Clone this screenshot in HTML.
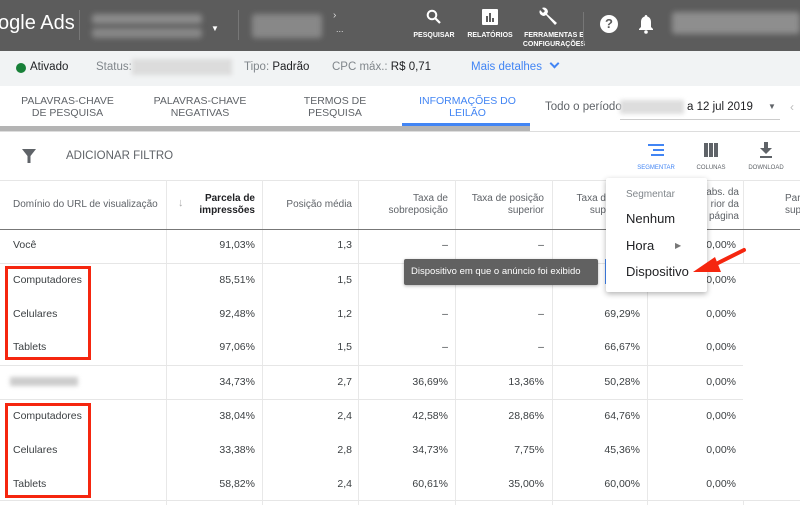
<!DOCTYPE html>
<html><head><meta charset="utf-8"><style>
*{margin:0;padding:0;box-sizing:border-box}
body{width:800px;height:505px;overflow:hidden;background:#fff;font-family:"Liberation Sans",Arial,sans-serif;color:#3c4043;position:relative}
.a{position:absolute;white-space:nowrap}
.blur{position:absolute;background:#8a8a8a;filter:blur(3px);border-radius:3px}
.hd{position:absolute;left:0;top:0;width:800px;height:51px;background:#5c5c5c}
.ic{color:#fff;font-size:7px;font-weight:bold;text-align:center;line-height:9px}
.tab{font-size:10.5px;color:#5f6368;text-align:center;line-height:12px;font-weight:500}
.th{font-size:10px;color:#5f6368;line-height:12px;text-align:right}
.c{font-size:10.5px;color:#3c4043}
.r{text-align:right}
.vl{position:absolute;top:180px;width:1px;height:325px;background:#e8e8e8}
.hl{position:absolute;left:0;width:800px;height:1px;background:#e6e6e6}
</style></head><body>
<div class="hd"></div>
<div class="a" style="left:-2px;top:12px;font-size:20px;color:#fff">ogle Ads</div>
<div class="a" style="left:79px;top:10px;width:1px;height:30px;background:#777"></div>
<div class="blur" style="left:92px;top:14px;width:110px;height:10px;background:#8c8c8c"></div>
<div class="blur" style="left:92px;top:28px;width:110px;height:10px;background:#888"></div>
<div class="a" style="left:211px;top:24px;color:#fff;font-size:8px">▼</div>
<div class="a" style="left:238px;top:10px;width:1px;height:30px;background:#777"></div>
<div class="blur" style="left:252px;top:14px;width:70px;height:24px;background:#888"></div>
<div class="a" style="left:333px;top:10px;color:#ddd;font-size:10px">›</div>
<div class="a" style="left:336px;top:24px;color:#ddd;font-size:9px">...</div>
<svg class="a" style="left:426px;top:9px" width="16" height="16" viewBox="0 0 16 16"><circle cx="6" cy="6" r="4.3" fill="none" stroke="#fff" stroke-width="2"/><path d="M9 9l5 5" stroke="#fff" stroke-width="2.2"/></svg>
<div class="a ic" style="left:409px;top:31px;width:50px">PESQUISAR</div>
<svg class="a" style="left:482px;top:9px" width="16" height="16"><rect x="0" y="0" width="16" height="16" rx="1" fill="#fff"/><rect x="4" y="7" width="2" height="6" fill="#5c5c5c"/><rect x="7" y="4" width="2" height="9" fill="#5c5c5c"/><rect x="10" y="9" width="2" height="4" fill="#5c5c5c"/></svg>
<div class="a ic" style="left:465px;top:31px;width:50px">RELATÓRIOS</div>
<svg class="a" style="left:537px;top:6px" width="22" height="22" viewBox="0 0 22 22"><path d="M3 4a4 4 0 0 0 6 5l9 10 2-2-10-9a4 4 0 0 0-5-6l3 3-2 2z" fill="#fff"/></svg>
<div class="a ic" style="left:522px;top:31px;width:64px">FERRAMENTAS E<br>CONFIGURAÇÕES</div>
<div class="a" style="left:583px;top:12px;width:1px;height:34px;background:#777"></div>
<div class="a" style="left:600px;top:15px;width:18px;height:18px;border-radius:50%;background:#fff;color:#5c5c5c;font-size:13px;font-weight:bold;text-align:center;line-height:18px">?</div>
<svg class="a" style="left:638px;top:14px" width="16" height="20" viewBox="0 0 16 20"><path d="M8 1c-1 0-1.3.8-1.3 1.5C4 3.3 3 5.5 3 8v5l-2 2v1h14v-1l-2-2V8c0-2.5-1-4.7-3.7-5.5C9.3 1.8 9 1 8 1z" fill="#fff"/><circle cx="8" cy="18" r="1.8" fill="#fff"/></svg>
<div class="blur" style="left:672px;top:12px;width:128px;height:22px;background:#8e8e8e"></div>

<div class="a" style="left:0;top:51px;width:800px;height:35px;background:#f1f3f4"></div>
<div class="a" style="left:16px;top:63px;width:10px;height:10px;border-radius:50%;background:#188038"></div>
<div class="a" style="left:30px;top:61px;font-size:11.5px;color:#202124">Ativado</div>
<div class="a" style="left:96px;top:61px;font-size:11.5px;color:#80868b">Status:</div>
<div class="a" style="left:132px;top:59px;width:100px;height:16px;background:#dcdcdc;filter:blur(2px)"></div>
<div class="a" style="left:244px;top:61px;font-size:11.5px;color:#80868b">Tipo: <span style="color:#202124">Padrão</span></div>
<div class="a" style="left:332px;top:61px;font-size:11.5px;color:#80868b">CPC máx.: <span style="color:#202124">R$ 0,71</span></div>
<div class="a" style="left:471px;top:61px;font-size:11.5px;color:#4285f4">Mais detalhes <span style="display:inline-block;width:7px;height:7px;border-right:2px solid #4285f4;border-bottom:2px solid #4285f4;transform:rotate(45deg);margin-left:6px;position:relative;top:-3px"></span></div>

<div class="a tab" style="left:10px;top:95px;width:115px">PALAVRAS-CHAVE<br>DE PESQUISA</div>
<div class="a tab" style="left:140px;top:95px;width:120px">PALAVRAS-CHAVE<br>NEGATIVAS</div>
<div class="a tab" style="left:285px;top:95px;width:100px">TERMOS DE<br>PESQUISA</div>
<div class="a tab" style="left:405px;top:95px;width:125px;color:#4285f4">INFORMAÇÕES DO<br>LEILÃO</div>
<div class="a" style="left:402px;top:123px;width:128px;height:3px;background:#4285f4"></div>
<div class="a" style="left:0;top:126px;width:530px;height:5px;background:#b4b4b4"></div>
<div class="a" style="left:0;top:131px;width:800px;height:1px;background:#ddd"></div>
<div class="a" style="left:545px;top:101px;font-size:11.5px;color:#5f6368">Todo o período</div>
<div class="a" style="left:620px;top:100px;width:64px;height:14px;background:#ddd;filter:blur(2px)"></div>
<div class="a" style="left:687px;top:101px;font-size:11.5px;color:#202124">a 12 jul 2019</div>
<div class="a" style="left:768px;top:102px;font-size:8px;color:#5f6368">▼</div>
<div class="a" style="left:620px;top:119px;width:160px;height:1px;background:#ccc"></div>
<div class="a" style="left:790px;top:100px;font-size:12px;color:#bbb">‹</div>

<svg class="a" style="left:22px;top:148px" width="14" height="16"><path d="M0 1h14L8.5 8v7h-3V8z" fill="#5f6368"/></svg>
<div class="a" style="left:66px;top:150px;font-size:11.5px;color:#5f6368;font-weight:500">ADICIONAR FILTRO</div>
<svg class="a" style="left:648px;top:144px" width="16" height="14"><rect x="0" y="0" width="16" height="2" fill="#4285f4"/><rect x="5" y="5" width="11" height="2" fill="#4285f4"/><rect x="3" y="10" width="13" height="2" fill="#4285f4"/></svg>
<div class="a" style="left:630px;top:165px;width:52px;text-align:center;font-size:6px;color:#4285f4">SEGMENTAR</div>
<svg class="a" style="left:704px;top:143px" width="14" height="14"><rect x="0" y="0" width="4" height="14" fill="#5f6368"/><rect x="5" y="0" width="4" height="14" fill="#5f6368"/><rect x="10" y="0" width="4" height="14" fill="#5f6368"/></svg>
<div class="a" style="left:690px;top:165px;width:42px;text-align:center;font-size:6px;color:#5f6368">COLUNAS</div>
<svg class="a" style="left:760px;top:142px" width="12" height="16"><path d="M4 0h4v6h4L6 12 0 6h4z" fill="#5f6368"/><rect x="0" y="14" width="12" height="2" fill="#5f6368"/></svg>
<div class="a" style="left:744px;top:165px;width:44px;text-align:center;font-size:6px;color:#5f6368">DOWNLOAD</div>

<div class="hl" style="top:180px"></div>
<div class="vl" style="left:166px"></div><div class="vl" style="left:262px"></div><div class="vl" style="left:358px"></div><div class="vl" style="left:455px"></div><div class="vl" style="left:552px"></div><div class="vl" style="left:647px"></div><div class="vl" style="left:743px"></div>
<div class="a th" style="left:13px;top:199px;text-align:left">Domínio do URL de visualização</div>
<div class="a" style="left:178px;top:197px;font-size:11px;color:#aaa">↓</div>
<div class="a th" style="left:190px;top:193px;width:65px;color:#202124;font-weight:bold">Parcela de<br>impressões</div>
<div class="a th" style="left:270px;top:199px;width:82px">Posição média</div>
<div class="a th" style="left:360px;top:193px;width:88px">Taxa de<br>sobreposição</div>
<div class="a th" style="left:456px;top:193px;width:88px">Taxa de posição<br>superior</div>
<div class="a th" style="left:556px;top:193px;width:50px">Taxa d<br>sup</div>
<div class="a th" style="left:660px;top:187px;width:79px">abs. da<br>rior da<br>página</div>
<div class="a th" style="left:750px;top:193px;width:60px;text-align:left;padding-left:35px">Par<br>sup</div>
<div class="hl" style="top:229px;background:#777"></div>

<div class="hl" style="top:263px"></div>
<div class="hl" style="top:365px"></div>
<div class="hl" style="top:399px"></div>
<div class="hl" style="top:500px"></div>
<div class="a" style="left:743px;top:264px;width:57px;height:236px;background:#fff"></div>

<div class="a c" style="left:13px;top:239px">Você</div>
<div class="a c" style="left:13px;top:274px">Computadores</div>
<div class="a c" style="left:13px;top:308px">Celulares</div>
<div class="a c" style="left:13px;top:341px">Tablets</div>
<div class="a" style="left:10px;top:377px;width:68px;height:9px;background:#ccc;filter:blur(2px)"></div>
<div class="a c" style="left:13px;top:410px">Computadores</div>
<div class="a c" style="left:13px;top:444px">Celulares</div>
<div class="a c" style="left:13px;top:478px">Tablets</div>
<div class="a" style="left:5px;top:266px;width:86px;height:94px;border:3px solid #f5260f"></div>
<div class="a" style="left:5px;top:403px;width:86px;height:95px;border:3px solid #f5260f"></div>

<div class="a c r" style="left:170px;width:85px;top:239px">91,03%</div>
<div class="a c r" style="left:170px;width:85px;top:274px">85,51%</div>
<div class="a c r" style="left:170px;width:85px;top:308px">92,48%</div>
<div class="a c r" style="left:170px;width:85px;top:341px">97,06%</div>
<div class="a c r" style="left:170px;width:85px;top:376px">34,73%</div>
<div class="a c r" style="left:170px;width:85px;top:410px">38,04%</div>
<div class="a c r" style="left:170px;width:85px;top:444px">33,38%</div>
<div class="a c r" style="left:170px;width:85px;top:478px">58,82%</div>
<div class="a c r" style="left:270px;width:82px;top:239px">1,3</div>
<div class="a c r" style="left:270px;width:82px;top:274px">1,5</div>
<div class="a c r" style="left:270px;width:82px;top:308px">1,2</div>
<div class="a c r" style="left:270px;width:82px;top:341px">1,5</div>
<div class="a c r" style="left:270px;width:82px;top:376px">2,7</div>
<div class="a c r" style="left:270px;width:82px;top:410px">2,4</div>
<div class="a c r" style="left:270px;width:82px;top:444px">2,8</div>
<div class="a c r" style="left:270px;width:82px;top:478px">2,4</div>
<div class="a c r" style="left:360px;width:88px;top:239px">–</div>
<div class="a c r" style="left:360px;width:88px;top:308px">–</div>
<div class="a c r" style="left:360px;width:88px;top:341px">–</div>
<div class="a c r" style="left:360px;width:88px;top:376px">36,69%</div>
<div class="a c r" style="left:360px;width:88px;top:410px">42,58%</div>
<div class="a c r" style="left:360px;width:88px;top:444px">34,73%</div>
<div class="a c r" style="left:360px;width:88px;top:478px">60,61%</div>
<div class="a c r" style="left:456px;width:88px;top:239px">–</div>
<div class="a c r" style="left:456px;width:88px;top:308px">–</div>
<div class="a c r" style="left:456px;width:88px;top:341px">–</div>
<div class="a c r" style="left:456px;width:88px;top:376px">13,36%</div>
<div class="a c r" style="left:456px;width:88px;top:410px">28,86%</div>
<div class="a c r" style="left:456px;width:88px;top:444px">7,75%</div>
<div class="a c r" style="left:456px;width:88px;top:478px">35,00%</div>
<div class="a c r" style="left:556px;width:84px;top:308px">69,29%</div>
<div class="a c r" style="left:556px;width:84px;top:341px">66,67%</div>
<div class="a c r" style="left:556px;width:84px;top:376px">50,28%</div>
<div class="a c r" style="left:556px;width:84px;top:410px">64,76%</div>
<div class="a c r" style="left:556px;width:84px;top:444px">45,36%</div>
<div class="a c r" style="left:556px;width:84px;top:478px">60,00%</div>
<div class="a c r" style="left:650px;width:86px;top:239px">0,00%</div>
<div class="a c r" style="left:650px;width:86px;top:274px">0,00%</div>
<div class="a c r" style="left:650px;width:86px;top:308px">0,00%</div>
<div class="a c r" style="left:650px;width:86px;top:341px">0,00%</div>
<div class="a c r" style="left:650px;width:86px;top:376px">0,00%</div>
<div class="a c r" style="left:650px;width:86px;top:410px">0,00%</div>
<div class="a c r" style="left:650px;width:86px;top:444px">0,00%</div>
<div class="a c r" style="left:650px;width:86px;top:478px">0,00%</div>

<div class="a" style="left:605px;top:259px;width:3px;height:25px;background:#4285f4"></div>
<div class="a" style="left:404px;top:259px;width:194px;height:26px;background:#616161;border-radius:2px;color:#fff;font-size:9.5px;line-height:26px;padding-left:7px;box-shadow:0 1px 3px rgba(0,0,0,.3)">Dispositivo em que o anúncio foi exibido</div>

<div class="a" style="left:606px;top:178px;width:101px;height:114px;background:#fff;box-shadow:0 2px 6px rgba(0,0,0,.3);border-radius:2px"></div>
<div class="a" style="left:626px;top:189px;font-size:10px;color:#80868b">Segmentar</div>
<div class="a" style="left:626px;top:211px;font-size:13px;color:#202124">Nenhum</div>
<div class="a" style="left:626px;top:238px;font-size:13px;color:#202124">Hora</div>
<div class="a" style="left:675px;top:241px;font-size:8px;color:#777">▶</div>
<div class="a" style="left:626px;top:264px;font-size:13px;color:#202124">Dispositivo</div>
<svg class="a" style="left:688px;top:244px" width="60" height="36"><path d="M56 6L24 22" stroke="#f5260f" stroke-width="4" stroke-linecap="round"/><path d="M5 28L27 13l6 15z" fill="#f5260f"/></svg>
</body></html>
